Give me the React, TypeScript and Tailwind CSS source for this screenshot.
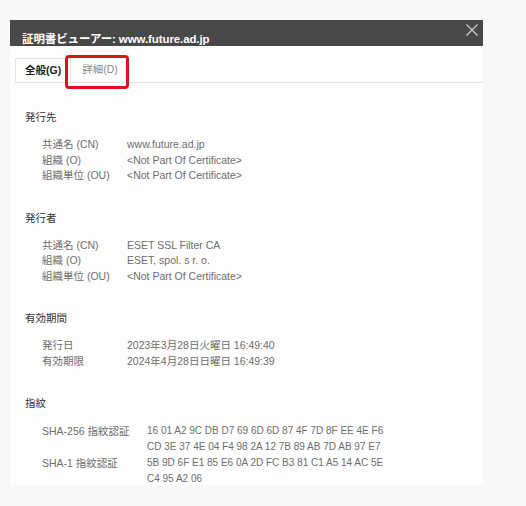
const rows = {
  subject: [
    ['共通名 (CN)', 'www.future.ad.jp'],
    ['組織 (O)', '<Not Part Of Certificate>'],
    ['組織単位 (OU)', '<Not Part Of Certificate>'],
  ],
  issuer: [
    ['共通名 (CN)', 'ESET SSL Filter CA'],
    ['組織 (O)', 'ESET, spol. s r. o.'],
    ['組織単位 (OU)', '<Not Part Of Certificate>'],
  ],
  validity: [
    ['発行日', '2023年3月28日火曜日 16:49:40'],
    ['有効期限', '2024年4月28日日曜日 16:49:39'],
  ],
}

function Section({ title, children }: { title: string; children: React.ReactNode }) {
  return (
    <section>
      <h3 className="leading-4 text-[#333]">{title}</h3>
      <div className="mt-3 pl-[17px]">{children}</div>
    </section>
  )
}

function Rows({ items }: { items: string[][] }) {
  return (
    <dl className="grid grid-cols-[85px_1fr] leading-[15.5px] text-[#6e6e6e]">
      {items.map(([k, v]) => (
        <div key={k} className="contents">
          <dt>{k}</dt>
          <dd>{v}</dd>
        </div>
      ))}
    </dl>
  )
}

export default function App() {
  return (
    <div
      className="h-[506px] w-[526px] bg-[#f8f8f8] pl-[10px] pt-5 text-[10.5px]"
      style={{ fontFamily: '"Liberation Sans", "Noto Sans CJK JP", sans-serif' }}
    >
      <div className="w-[473px]">
        {/* タイトルバー */}
        <header className="relative flex h-[26px] items-end overflow-hidden bg-[#484848] pb-px pl-3">
          <h1 className="text-[11.5px] font-bold leading-none tracking-[-0.1px] text-white">
            証明書ビューアー: www.future.ad.jp
          </h1>
          <button aria-label="閉じる" className="absolute right-[5px] top-[4px] p-0">
            <svg width="12" height="12" viewBox="0 0 12 12" fill="none">
              <path d="M0.5 0.5L11.5 11.5M11.5 0.5L0.5 11.5" stroke="#d0d0d0" strokeWidth="1.1" />
            </svg>
          </button>
        </header>

        <div className="h-[439px] bg-[#fdfdfd]">
          {/* タブ */}
          <div className="relative ml-[5px] flex h-[37px] items-end border-b border-[#e4e4e4]">
            <div className="flex h-6 items-center border-x border-t border-[#e4e4e4] px-[9px] font-bold text-[#1e1e1e]">
              全般(G)
            </div>
            <div className="flex h-6 items-center pl-[11px] text-[#8a8a8a]">詳細(D)</div>
            <div className="absolute left-[50px] top-[9px] h-[34px] w-[64px] rounded-[4px] border-[3px] border-[#d8141c]" />
          </div>

          <div className="flex flex-col gap-[26px] pl-[15px] pt-[26px]">
            <Section title="発行先">
              <Rows items={rows.subject} />
            </Section>
            <Section title="発行者">
              <Rows items={rows.issuer} />
            </Section>
            <Section title="有効期間">
              <Rows items={rows.validity} />
            </Section>
            <Section title="指紋">
              <dl className="grid grid-cols-[105px_1fr] leading-4 text-[#6e6e6e]">
                <dt>SHA-256 指紋認証</dt>
                <dd className="text-[10px]">
                  16 01 A2 9C DB D7 69 6D 6D 87 4F 7D 8F EE 4E F6
                  <br />
                  CD 3E 37 4E 04 F4 98 2A 12 7B 89 AB 7D AB 97 E7
                </dd>
                <dt>SHA-1 指紋認証</dt>
                <dd className="text-[10px]">
                  5B 9D 6F E1 85 E6 0A 2D FC B3 81 C1 A5 14 AC 5E
                  <br />
                  C4 95 A2 06
                </dd>
              </dl>
            </Section>
          </div>
        </div>
      </div>
    </div>
  )
}
